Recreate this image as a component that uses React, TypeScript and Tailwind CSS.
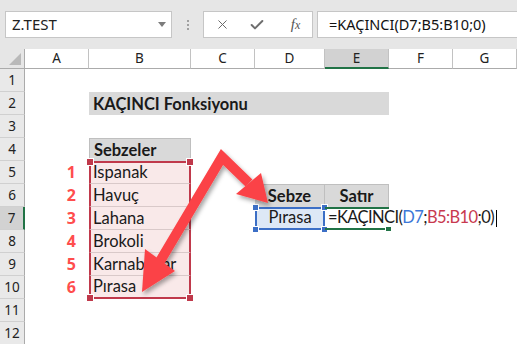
import React from 'react';
import { X, Check } from 'lucide-react';

const cell = "font-['Lato',sans-serif] text-[16.5px] leading-[21px] text-[#1a1a1a]";

function ColHead({ label, active }: { label: string; active?: boolean }) {
  return (
    <div
      className={`flex items-center justify-center border-r border-[#c2c2c2] font-['Noto_Sans',sans-serif] text-[13.5px] text-[#222] ${
        active ? 'bg-[#d2d2d2] border-b-2 border-b-[#217346]' : 'border-b border-b-[#ababab]'
      }`}
    >
      {label}
    </div>
  );
}

function RowHead({ n, active }: { n: number; active?: boolean }) {
  return (
    <div
      className={`flex items-center justify-center border-b border-[#d0d0d0] font-['Noto_Sans',sans-serif] text-[13.5px] text-[#222] ${
        active ? 'bg-[#d2d2d2] border-r-2 border-r-[#217346]' : 'bg-[#e9e9e9] border-r border-r-[#ababab]'
      }`}
    >
      {n}
    </div>
  );
}

function Num({ n }: { n: number }) {
  return (
    <div className="flex items-center justify-end pr-[13px] pb-[2px] font-['Open_Sans',sans-serif] text-[16px] font-bold text-[#ff4d4d]">
      {n}
    </div>
  );
}

function Veg({ name, first, last }: { name: string; first?: boolean; last?: boolean }) {
  return (
    <div
      className={`relative flex items-end pl-[2px] bg-[#f9e9e9] border-x-2 border-x-[#c0394b] ${cell} ${
        first ? 'border-t-2 border-t-[#c0394b]' : ''
      } ${last ? 'border-b-2 border-b-[#c0394b]' : 'border-b border-b-[#d9c9c9]'}`}
    >
      {name}
      {first && (
        <>
          <span className="absolute -left-[5px] -top-[5px] w-[8px] h-[8px] bg-[#c0394b] border border-white" />
          <span className="absolute -right-[5px] -top-[5px] w-[8px] h-[8px] bg-[#c0394b] border border-white" />
        </>
      )}
      {last && (
        <>
          <span className="absolute -left-[5px] -bottom-[5px] w-[8px] h-[8px] bg-[#c0394b] border border-white" />
          <span className="absolute -right-[5px] -bottom-[5px] w-[8px] h-[8px] bg-[#c0394b] border border-white" />
        </>
      )}
    </div>
  );
}

function Blank({ span }: { span?: 'two' | 'five' | 'seven' }) {
  const cls = span === 'two' ? 'col-span-2' : span === 'five' ? 'col-span-5' : span === 'seven' ? 'col-span-7' : '';
  return <div className={cls} />;
}

export default function App() {
  return (
    <div className="relative w-[517px] h-[344px] overflow-hidden bg-white">
      {/* formula bar strip */}
      <div className="flex items-center h-[49px] pl-[5px] bg-[#e6e6e6]">
        <div className="relative flex items-center w-[167px] h-[27px] bg-white border border-[#c6c6c6] pl-[6px] font-['Noto_Sans',sans-serif] text-[15px] text-[#222]">
          Z.TEST
          <svg className="absolute right-[5px] top-[10px]" width="8" height="5" viewBox="0 0 8 5">
            <path d="M0 0 L8 0 L4 5 Z" fill="#7c7c7c" />
          </svg>
        </div>
        <div className="flex flex-col items-center justify-center gap-[2px] w-[31px]">
          <span className="w-[2px] h-[2px] bg-[#a0a0a0]" />
          <span className="w-[2px] h-[2px] bg-[#a0a0a0]" />
          <span className="w-[2px] h-[2px] bg-[#a0a0a0]" />
        </div>
        <div className="flex items-center w-[110px] h-[27px] bg-white border border-[#c6c6c6]">
          <div className="flex w-[37px] justify-center">
            <X size={15} strokeWidth={1.6} color="#6a6a6a" />
          </div>
          <div className="flex w-[32px] justify-center">
            <Check size={16} strokeWidth={3} color="#6e6e6e" />
          </div>
          <div className="flex flex-1 justify-center pl-[6px] font-['Liberation_Serif',serif] italic text-[15px] text-[#555]">
            f<span className="text-[12px] mt-[3px]">x</span>
          </div>
        </div>
        <div className="flex items-center flex-1 h-[27px] ml-[4px] bg-white border border-r-0 border-[#c6c6c6] pl-[11px] font-['Noto_Sans',sans-serif] text-[14.5px] text-[#111]">
          =KAÇINCI(D7;B5:B10;0)
        </div>
      </div>

      {/* sheet */}
      <div className="grid grid-cols-[25px_64px_102px_64px_70px_64px_64px_64px] grid-rows-[20px_repeat(12,23px)]">
        <div className="relative bg-[#e6e6e6] border-r border-b border-[#ababab]">
          <svg className="absolute right-[3px] bottom-[3px]" width="12" height="12" viewBox="0 0 12 12">
            <path d="M12 0 L12 12 L0 12 Z" fill="#b9b9b9" />
          </svg>
        </div>
        <ColHead label="A" />
        <ColHead label="B" />
        <ColHead label="C" />
        <ColHead label="D" />
        <ColHead label="E" active />
        <ColHead label="F" />
        <ColHead label="G" />

        <RowHead n={1} />
        <Blank span="seven" />

        <RowHead n={2} />
        <div />
        <div className={`col-span-4 flex items-end pl-[4px] bg-[#d9d9d9] font-bold ${cell}`}>KAÇINCI Fonksiyonu</div>
        <Blank span="two" />

        <RowHead n={3} />
        <Blank span="seven" />

        <RowHead n={4} />
        <div />
        <div className={`flex items-end pl-[4px] bg-[#d9d9d9] border-t border-x border-[#bfbfbf] font-bold ${cell}`}>Sebzeler</div>
        <Blank span="five" />

        <RowHead n={5} />
        <Num n={1} />
        <Veg name="Ispanak" first />
        <Blank span="five" />

        <RowHead n={6} />
        <Num n={2} />
        <Veg name="Havuç" />
        <div />
        <div className={`flex items-end justify-center bg-[#d9d9d9] border-t border-r border-[#bfbfbf] font-bold ${cell}`}>Sebze</div>
        <div className={`flex items-end justify-center bg-[#d9d9d9] border-t border-r border-[#bfbfbf] font-bold ${cell}`}>Satır</div>
        <Blank span="two" />

        <RowHead n={7} active />
        <Num n={3} />
        <Veg name="Lahana" />
        <div />
        <div className={`relative flex items-end justify-center bg-[#dde8f6] border-2 border-[#3c6fc6] ${cell}`}>
          Pırasa
          <span className="absolute -left-[5px] -top-[5px] w-[7px] h-[7px] bg-[#3c6fc6] border border-white" />
          <span className="absolute -right-[5px] -top-[5px] w-[7px] h-[7px] bg-[#3c6fc6] border border-white" />
          <span className="absolute -left-[5px] -bottom-[5px] w-[7px] h-[7px] bg-[#3c6fc6] border border-white" />
          <span className="absolute -right-[5px] -bottom-[5px] w-[7px] h-[7px] bg-[#3c6fc6] border border-white" />
        </div>
        <div className="relative z-10 flex items-end pl-[3px] border-y-2 border-[#217346] whitespace-nowrap font-['Lato',sans-serif] text-[16.5px] leading-[21px] tracking-[-0.6px] text-[#1a1a1a]">
          <span>
            =KAÇINCI(<span className="text-[#3c78d8]">D7</span>;<span className="text-[#c8394f]">B5:B10</span>;0)
          </span>
          <span className="shrink-0 ml-[2px] mb-[1px] w-[1px] h-[17px] bg-black" />
          <span className="absolute -right-[3px] -bottom-[4px] w-[7px] h-[6px] bg-[#217346] border border-white" />
        </div>
        <Blank span="two" />

        <RowHead n={8} />
        <Num n={4} />
        <Veg name="Brokoli" />
        <Blank span="five" />

        <RowHead n={9} />
        <Num n={5} />
        <Veg name="Karnabahar" />
        <Blank span="five" />

        <RowHead n={10} />
        <Num n={6} />
        <Veg name="Pırasa" last />
        <Blank span="five" />

        <RowHead n={11} />
        <Blank span="seven" />

        <RowHead n={12} />
        <Blank span="seven" />
      </div>

      {/* callout arrows */}
      <svg className="absolute left-0 top-0 pointer-events-none" width="517" height="344" viewBox="0 0 517 344">
        <defs>
          <filter id="sh" x="-20%" y="-20%" width="140%" height="140%">
            <feDropShadow dx="2" dy="3" stdDeviation="2" floodColor="#000" floodOpacity="0.35" />
          </filter>
        </defs>
        <g filter="url(#sh)" fill="#fb4346" stroke="none">
          <polyline points="159,263 222,157 249,183" fill="none" stroke="#fb4346" strokeWidth="10" strokeLinejoin="miter" />
          <polygon points="142,292 145,249 175,271" />
          <polygon points="268,203 236,194 261,173" />
        </g>
      </svg>
    </div>
  );
}
